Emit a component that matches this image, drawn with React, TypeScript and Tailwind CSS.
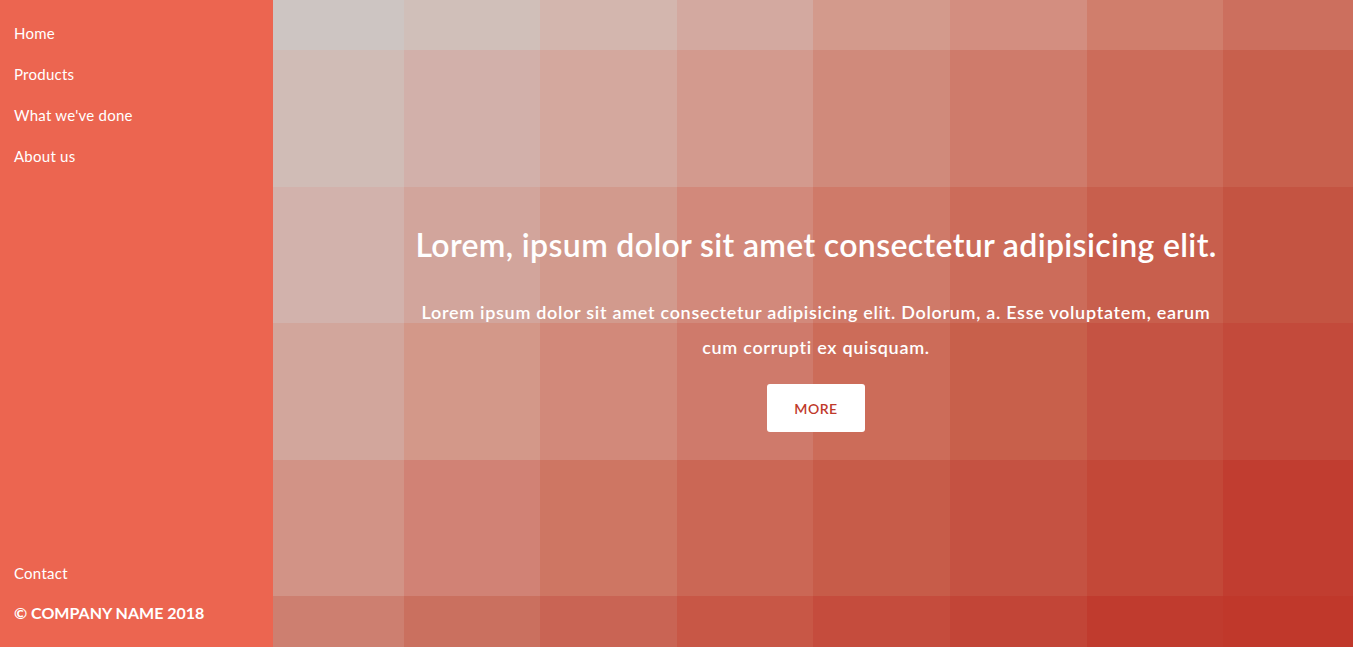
import React from "react";

const tiles: string[][] = [
  ["bg-[#cdc5c2]", "bg-[#d0bfb9]", "bg-[#d3b6ae]", "bg-[#d3a9a0]", "bg-[#d39a8c]", "bg-[#d38e80]", "bg-[#d07e6c]", "bg-[#cc6f5e]"],
  ["bg-[#d0bcb6]", "bg-[#d2b0aa]", "bg-[#d4a89e]", "bg-[#d39a8e]", "bg-[#d08a7b]", "bg-[#cf7b6b]", "bg-[#cc6c5a]", "bg-[#c8604d]"],
  ["bg-[#d2b2ac]", "bg-[#d2a59c]", "bg-[#d29a8d]", "bg-[#d2897b]", "bg-[#cf7a69]", "bg-[#cc6c5a]", "bg-[#c85f4d]", "bg-[#c45442]"],
  ["bg-[#d2a69c]", "bg-[#d39889]", "bg-[#d2897a]", "bg-[#cf7a6b]", "bg-[#cc6c59]", "bg-[#c8604b]", "bg-[#c55343]", "bg-[#c34a3b]"],
  ["bg-[#d29386]", "bg-[#d18275]", "bg-[#ce7663]", "bg-[#cb6755]", "bg-[#c75c49]", "bg-[#c55242]", "bg-[#c34838]", "bg-[#c13d30]"],
  ["bg-[#cd7f70]", "bg-[#ca705f]", "bg-[#c96454]", "bg-[#c85746]", "bg-[#c54c3d]", "bg-[#c24537]", "bg-[#c03b2e]", "bg-[#c0382b]"],
];

const navItems = ["Home", "Products", "What we've done", "About us"];

export default function App() {
  return (
    <div
      className="flex h-[647px] w-full overflow-hidden text-white"
      style={{ fontFamily: "Lato, 'Open Sans', sans-serif" }}
    >
      <aside className="flex w-[273px] shrink-0 flex-col justify-between bg-[#ec6550] px-[14px] pt-[23px] pb-[24px]">
        <nav className="flex flex-col">
          {navItems.map((item) => (
            <a key={item} href="#" className="h-[41px] text-[15px] leading-[20px] tracking-[0.25px]">
              {item}
            </a>
          ))}
        </nav>
        <div className="flex flex-col gap-[20px]">
          <a href="#" className="text-[15px] leading-[20px] tracking-[0.25px]">
            Contact
          </a>
          <div className="text-[16px] font-bold leading-[20px]">© COMPANY NAME 2018</div>
        </div>
      </aside>

      <main className="relative flex flex-1 items-center justify-center overflow-hidden bg-[#cf7a69]">
        <div className="absolute inset-0 grid grid-cols-[131px_136px_137px_136px_137px_137px_136px_130px] grid-rows-[50px_137px_136px_137px_136px_51px]">
          {tiles.map((row, r) =>
            row.map((cls, c) => <div key={`${r}-${c}`} className={cls} />)
          )}
        </div>

        <div className="relative flex flex-col items-center pt-[10px] pl-[6px] text-center">
          <h1 className="text-[32px] font-semibold leading-[40px] tracking-[0.35px]">
            Lorem, ipsum dolor sit amet consectetur adipisicing elit.
          </h1>
          <p className="mt-[30px] w-[800px] text-[18px] font-semibold leading-[35px] tracking-[0.7px]">
            Lorem ipsum dolor sit amet consectetur adipisicing elit. Dolorum, a. Esse voluptatem, earum cum corrupti ex quisquam.
          </p>
          <button className="mt-[19px] h-[48px] w-[98px] rounded-[3px] bg-white text-[14px] font-semibold tracking-[0.5px] text-[#c0392b]">
            MORE
          </button>
        </div>
      </main>
    </div>
  );
}
